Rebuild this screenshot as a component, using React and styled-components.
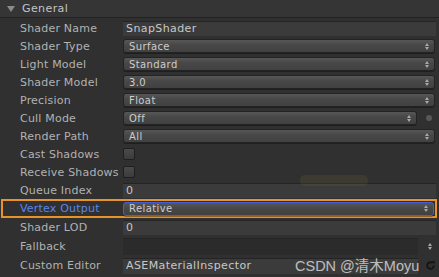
import React from 'react';
import styled, { createGlobalStyle } from 'styled-components';

const Global = createGlobalStyle`
  body {
    margin: 0;
    background: #303030;
    font-family: "DejaVu Sans", "Noto Sans CJK SC", sans-serif;
  }
`;

const Panel = styled.div`
  width: 439px;
  height: 277px;
  background: #303030;
  overflow: hidden;
  position: relative;
`;

const Header = styled.div`
  display: flex;
  align-items: center;
  height: 17px;
  padding-left: 7px;
  background: #353535;
  border-bottom: 1px solid #222;
  color: #c4c4c4;
  font-size: 11px;
  letter-spacing: 0.4px;
`;

const Triangle = styled.span`
  width: 0;
  height: 0;
  border-left: 4px solid transparent;
  border-right: 4px solid transparent;
  border-top: 6px solid #8a8a8a;
  margin-right: 7px;
`;

const Body = styled.div`
  display: flex;
  flex-direction: column;
  padding-top: 1px;
`;

const Row = styled.div`
  display: grid;
  grid-template-columns: 103px 1fr;
  align-items: center;
  height: ${p => p.$h || 18}px;
  margin: 0 ${p => (p.$hl ? 2 : 3)}px 0 ${p => (p.$hl ? 1 : 0)}px;
  padding-left: ${p => (p.$hl ? 17 : 20)}px;
  border: ${p => (p.$hl ? '2px solid #e8922a' : 'none')};
  box-sizing: border-box;
`;

const Label = styled.div`
  color: ${p => (p.$active ? '#5a87ea' : '#b2b2b2')};
  font-size: 11px;
  letter-spacing: 0.2px;
  white-space: nowrap;
`;

const Field = styled.div`
  display: flex;
  align-items: center;
  gap: 6px;
`;

const TextBox = styled.div`
  flex: 1;
  height: ${p => p.$h || 15}px;
  background: ${p => p.$dark ? '#2b2b2b' : '#3b3b3b'};
  border-top: 1px solid #242424;
  box-sizing: border-box;
  color: #c8c8c8;
  font-size: 11px;
  letter-spacing: 0.4px;
  padding-left: 3px;
  line-height: 14px;
  white-space: nowrap;
  overflow: hidden;
`;

const Drop = styled.div`
  flex: 1;
  display: flex;
  align-items: center;
  justify-content: space-between;
  height: 14px;
  margin-right: ${p => p.$short ? 0 : 1}px;
  padding: 0 5px 0 5px;
  border-radius: 3px;
  background: linear-gradient(#575757, #484848 40%, #414141);
  border: 1px solid ${p => (p.$focus ? '#3d5fe0' : '#232323')};
  box-shadow: 0 1px 0 rgba(0,0,0,0.35);
  box-sizing: border-box;
  color: #cdcdcd;
  font-size: 10px;
  letter-spacing: 0.4px;
`;

const Arrows = styled.span`
  display: flex;
  flex-direction: column;
  gap: 1px;
  &::before, &::after {
    content: '';
    width: 0;
    height: 0;
    border-left: 2.5px solid transparent;
    border-right: 2.5px solid transparent;
  }
  &::before { border-bottom: 3px solid #a8a8a8; }
  &::after { border-top: 3px solid #a8a8a8; }
`;

const Dot = styled.span`
  width: 6px;
  height: 6px;
  border-radius: 50%;
  background: #585858;
  margin: 0 4px 0 3px;
`;

const Check = styled.div`
  width: 12px;
  height: 12px;
  border-radius: 2px;
  background: linear-gradient(#4a4a4a, #3c3c3c);
  border: 1px solid #1f1f1f;
  box-sizing: border-box;
`;

const SideIcon = styled.span`
  width: 12px;
  display: flex;
  justify-content: center;
  color: #d0d0d0;
`;

const Ghost = styled.div`
  position: absolute;
  left: 300px;
  top: 175px;
  width: 68px;
  height: 11px;
  border-radius: 5px;
  background: rgba(150, 130, 60, 0.12);
`;

const Watermark = styled.div`
  position: absolute;
  left: 295px;
  top: 254px;
  color: rgba(225, 225, 225, 0.8);
  font-family: "Liberation Sans", "Noto Sans CJK SC", sans-serif;
  font-size: 14.5px;
  white-space: nowrap;
`;

const Dropdown = ({ value, focus, short }) => (
  <Drop $focus={focus} $short={short}>
    <span>{value}</span>
    <Arrows />
  </Drop>
);

export default function App() {
  return (
    <Panel>
      <Global />
      <Header>
        <Triangle />
        General
      </Header>
      <Body>
        <Row>
          <Label>Shader Name</Label>
          <Field><TextBox>SnapShader</TextBox></Field>
        </Row>
        <Row><Label>Shader Type</Label><Field><Dropdown value="Surface" /></Field></Row>
        <Row><Label>Light Model</Label><Field><Dropdown value="Standard" /></Field></Row>
        <Row><Label>Shader Model</Label><Field><Dropdown value="3.0" /></Field></Row>
        <Row><Label>Precision</Label><Field><Dropdown value="Float" /></Field></Row>
        <Row>
          <Label>Cull Mode</Label>
          <Field><Dropdown value="Off" short /><Dot /></Field>
        </Row>
        <Row><Label>Render Path</Label><Field><Dropdown value="All" /></Field></Row>
        <Row><Label>Cast Shadows</Label><Field><Check /></Field></Row>
        <Row><Label>Receive Shadows</Label><Field><Check /></Field></Row>
        <Row><Label>Queue Index</Label><Field><TextBox>0</TextBox></Field></Row>
        <Row $hl $h={19}>
          <Label $active>Vertex Output</Label>
          <Field><Dropdown value="Relative" focus /></Field>
        </Row>
        <Row $h={19}><Label>Shader LOD</Label><Field><TextBox>0</TextBox></Field></Row>
        <Row $h={19}>
          <Label>Fallback</Label>
          <Field>
            <TextBox $h={17} $dark />
            <SideIcon><Arrows /></SideIcon>
          </Field>
        </Row>
        <Row $h={19}>
          <Label>Custom Editor</Label>
          <Field>
            <TextBox $h={16}>ASEMaterialInspector</TextBox>
            <SideIcon>
              <svg width="11" height="11" viewBox="0 0 10 10">
                <path d="M8 5a3 3 0 1 1-1-2.2" fill="none" stroke="#151515" strokeWidth="1.7" />
                <path d="M6 1h2.8v2.8z" fill="#151515" />
              </svg>
            </SideIcon>
          </Field>
        </Row>
      </Body>
      <Ghost />
      <Watermark>CSDN @清木Moyu</Watermark>
    </Panel>
  );
}
